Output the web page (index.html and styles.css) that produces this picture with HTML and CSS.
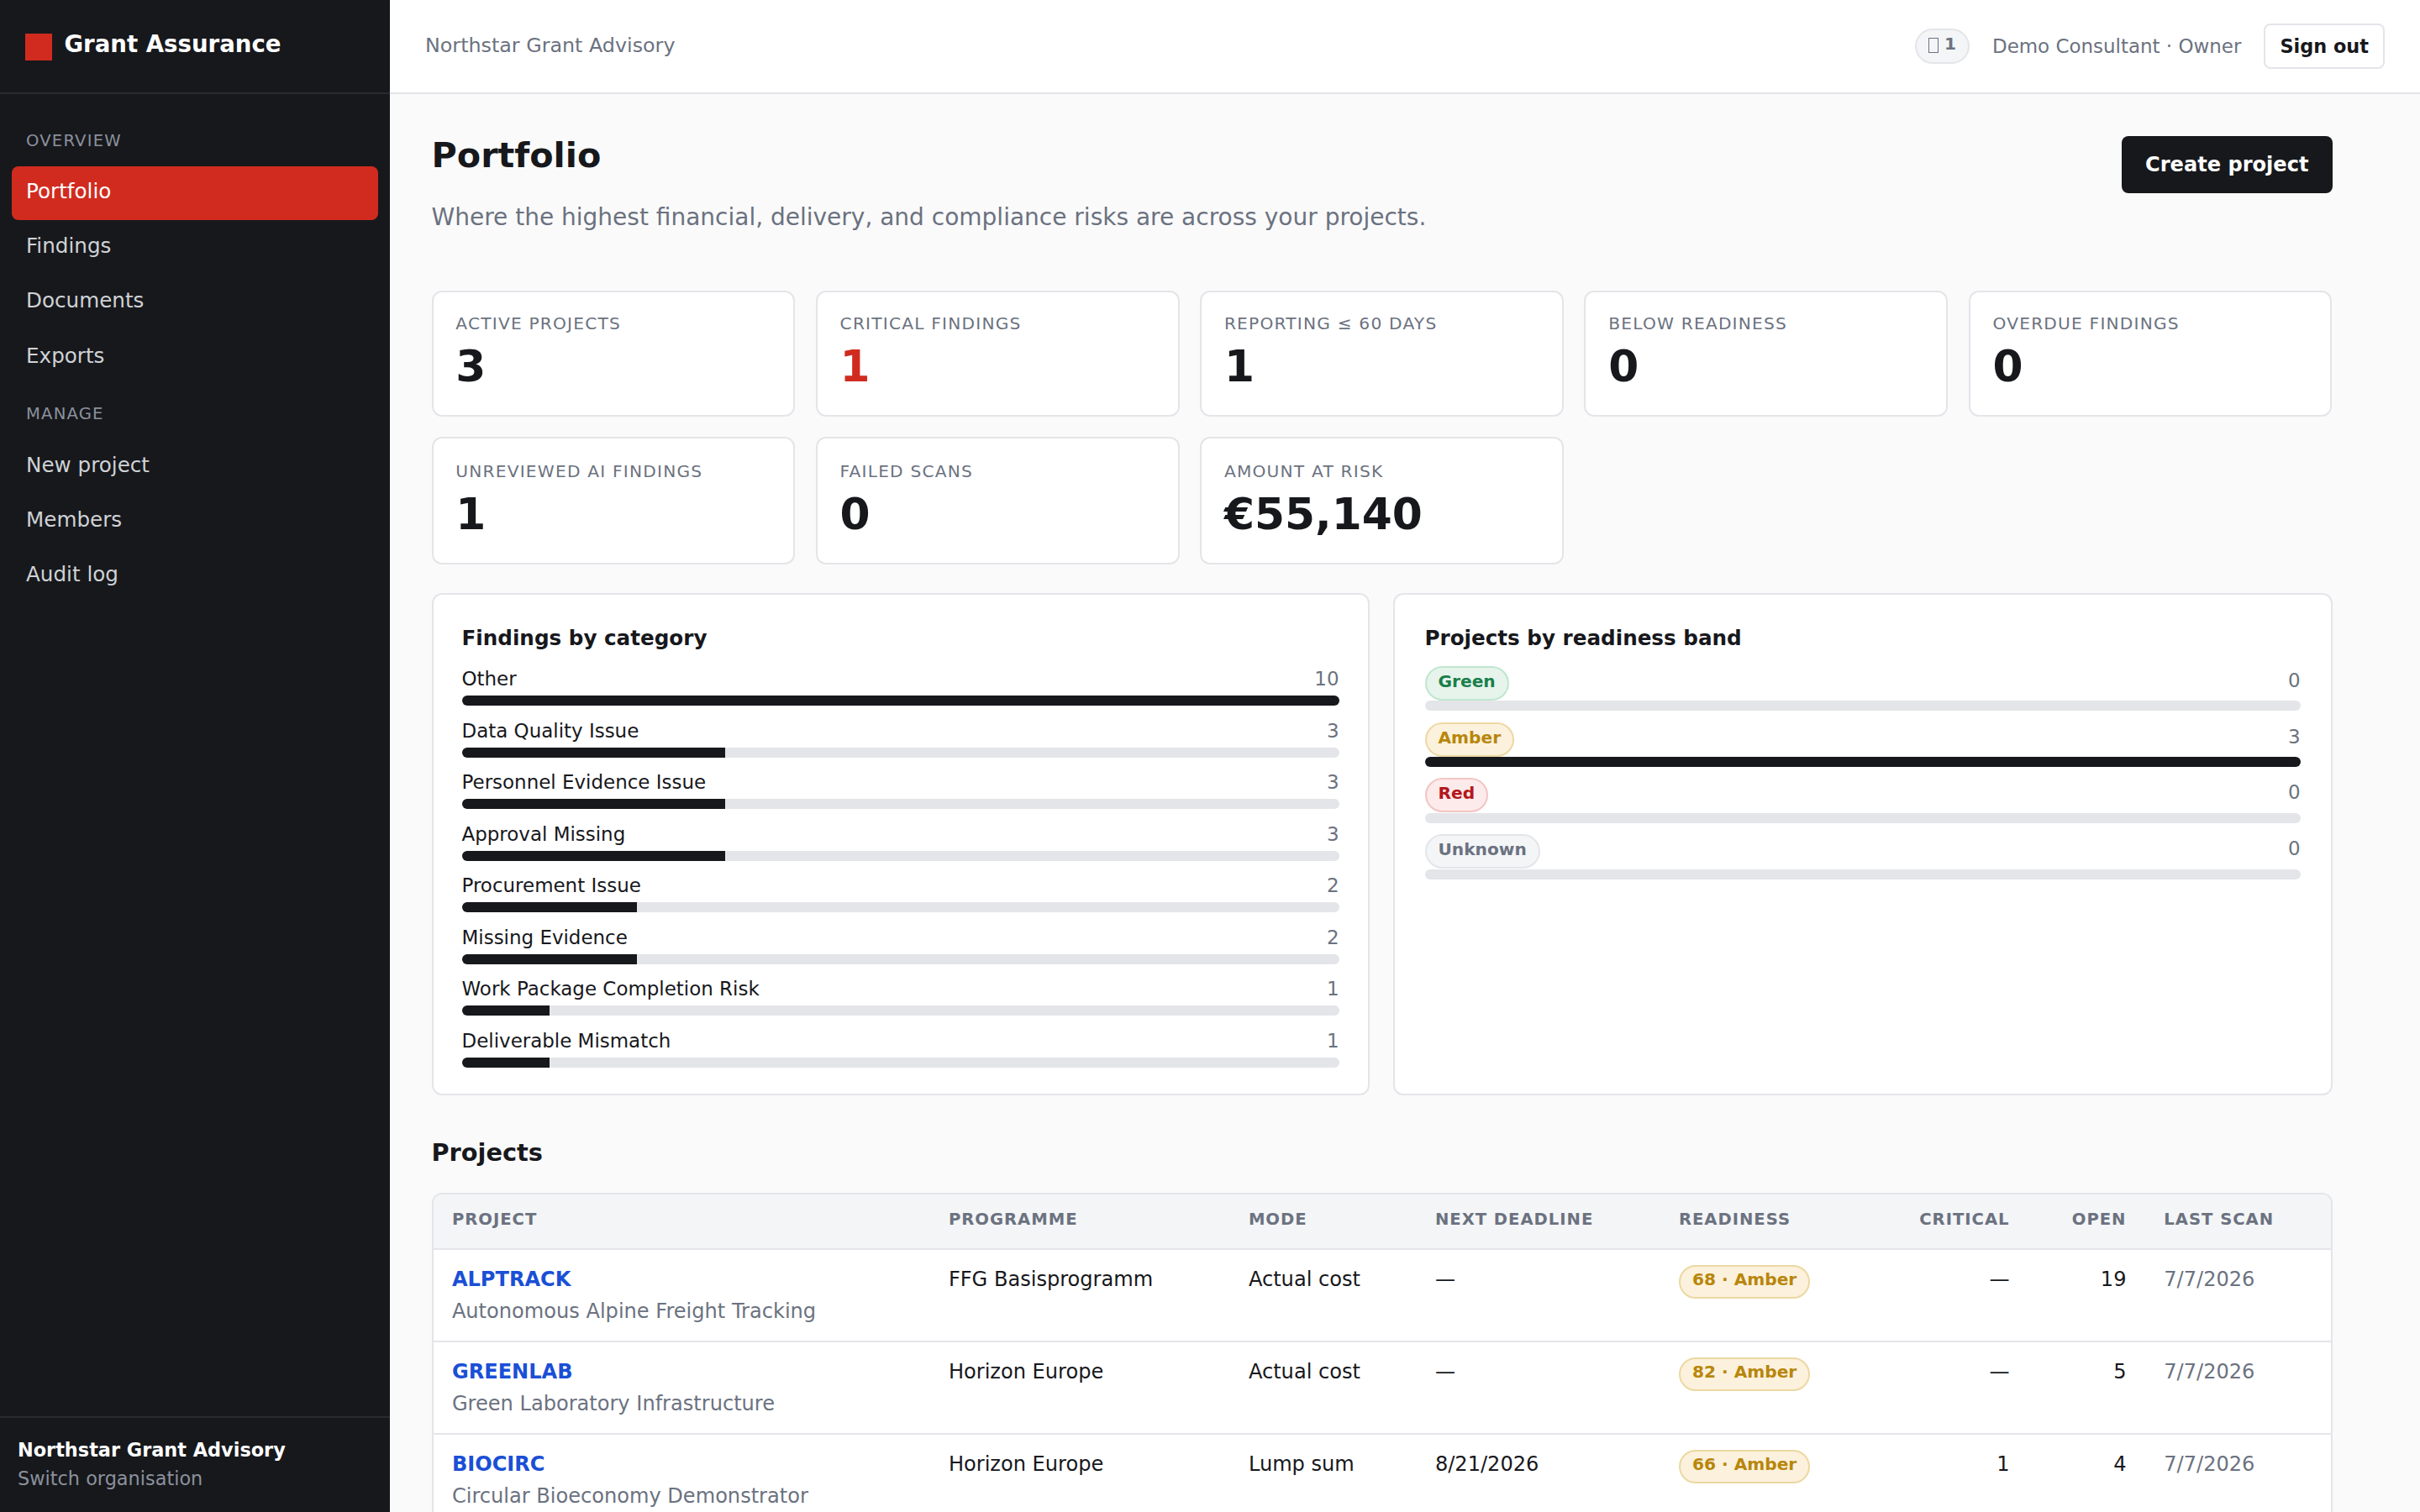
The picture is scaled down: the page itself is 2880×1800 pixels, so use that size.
FILE: index.html
```html
<!DOCTYPE html>
<html lang="en">
<head>
<meta charset="UTF-8" />
<meta name="viewport" content="width=device-width, initial-scale=1.0" />
<title>Portfolio – Grant Assurance</title>
<link rel="stylesheet" href="styles.css">
</head>
<body>
<div class="app">

  <aside class="sidebar">
    <div class="brand"><span class="brand-mark"></span><span>Grant Assurance</span></div>
    <nav class="nav">
      <div class="nav-label">Overview</div>
      <a class="nav-link active" href="#">Portfolio</a>
      <a class="nav-link" href="#">Findings</a>
      <a class="nav-link" href="#">Documents</a>
      <a class="nav-link" href="#">Exports</a>
      <div class="nav-label">Manage</div>
      <a class="nav-link" href="#">New project</a>
      <a class="nav-link" href="#">Members</a>
      <a class="nav-link" href="#">Audit log</a>
    </nav>
    <div class="sidebar-footer">
      <strong>Northstar Grant Advisory</strong>
      <a href="#">Switch organisation</a>
    </div>
  </aside>

  <div class="main">
    <header class="topbar">
      <span>Northstar Grant Advisory</span>
      <div class="topbar-right">
        <span class="badge alerts"><span class="alerts-icon"></span> 1</span>
        <span>Demo Consultant · Owner</span>
        <button class="btn-outline">Sign out</button>
      </div>
    </header>

    <main class="content">
      <div class="page-head">
        <div>
          <h1>Portfolio</h1>
          <p>Where the highest financial, delivery, and compliance risks are across your projects.</p>
        </div>
        <a class="btn" href="#">Create project</a>
      </div>

      <section class="stats">
        <div class="stat"><div class="stat-label">Active projects</div><div class="stat-value">3</div></div>
        <div class="stat"><div class="stat-label">Critical findings</div><div class="stat-value critical">1</div></div>
        <div class="stat"><div class="stat-label">Reporting ≤ 60 days</div><div class="stat-value">1</div></div>
        <div class="stat"><div class="stat-label">Below readiness</div><div class="stat-value">0</div></div>
        <div class="stat"><div class="stat-label">Overdue findings</div><div class="stat-value">0</div></div>
        <div class="stat"><div class="stat-label">Unreviewed AI findings</div><div class="stat-value">1</div></div>
        <div class="stat"><div class="stat-label">Failed scans</div><div class="stat-value">0</div></div>
        <div class="stat"><div class="stat-label">Amount at risk</div><div class="stat-value">€55,140</div></div>
      </section>

      <section class="panels">
        <div class="panel">
          <h3>Findings by category</h3>
          <div class="bar-row">
            <div class="bar-head"><span>Other</span><span class="muted">10</span></div>
            <div class="bar"><div class="bar-fill" style="width: 100%"></div></div>
          </div>
          <div class="bar-row">
            <div class="bar-head"><span>Data Quality Issue</span><span class="muted">3</span></div>
            <div class="bar"><div class="bar-fill" style="width: 30%"></div></div>
          </div>
          <div class="bar-row">
            <div class="bar-head"><span>Personnel Evidence Issue</span><span class="muted">3</span></div>
            <div class="bar"><div class="bar-fill" style="width: 30%"></div></div>
          </div>
          <div class="bar-row">
            <div class="bar-head"><span>Approval Missing</span><span class="muted">3</span></div>
            <div class="bar"><div class="bar-fill" style="width: 30%"></div></div>
          </div>
          <div class="bar-row">
            <div class="bar-head"><span>Procurement Issue</span><span class="muted">2</span></div>
            <div class="bar"><div class="bar-fill" style="width: 20%"></div></div>
          </div>
          <div class="bar-row">
            <div class="bar-head"><span>Missing Evidence</span><span class="muted">2</span></div>
            <div class="bar"><div class="bar-fill" style="width: 20%"></div></div>
          </div>
          <div class="bar-row">
            <div class="bar-head"><span>Work Package Completion Risk</span><span class="muted">1</span></div>
            <div class="bar"><div class="bar-fill" style="width: 10%"></div></div>
          </div>
          <div class="bar-row">
            <div class="bar-head"><span>Deliverable Mismatch</span><span class="muted">1</span></div>
            <div class="bar"><div class="bar-fill" style="width: 10%"></div></div>
          </div>
        </div>

        <div class="panel panel-bands">
          <h3>Projects by readiness band</h3>
          <div class="bar-row band">
            <div class="bar-head"><span class="badge green">Green</span><span class="muted">0</span></div>
            <div class="bar"><div class="bar-fill" style="width: 0%"></div></div>
          </div>
          <div class="bar-row band">
            <div class="bar-head"><span class="badge amber">Amber</span><span class="muted">3</span></div>
            <div class="bar"><div class="bar-fill" style="width: 100%"></div></div>
          </div>
          <div class="bar-row band">
            <div class="bar-head"><span class="badge red">Red</span><span class="muted">0</span></div>
            <div class="bar"><div class="bar-fill" style="width: 0%"></div></div>
          </div>
          <div class="bar-row band">
            <div class="bar-head"><span class="badge">Unknown</span><span class="muted">0</span></div>
            <div class="bar"><div class="bar-fill" style="width: 0%"></div></div>
          </div>
        </div>
      </section>

      <h2>Projects</h2>
      <div class="table-wrap">
        <table>
          <colgroup>
            <col class="col-project"><col class="col-programme"><col class="col-mode"><col class="col-deadline">
            <col class="col-readiness"><col class="col-critical"><col class="col-open"><col>
          </colgroup>
          <thead>
            <tr>
              <th>Project</th>
              <th>Programme</th>
              <th>Mode</th>
              <th>Next deadline</th>
              <th>Readiness</th>
              <th class="num">Critical</th>
              <th class="num">Open</th>
              <th>Last scan</th>
            </tr>
          </thead>
          <tbody>
            <tr>
              <td><a href="#">ALPTRACK</a><div class="sub">Autonomous Alpine Freight Tracking</div></td>
              <td>FFG Basisprogramm</td>
              <td>Actual cost</td>
              <td>—</td>
              <td><span class="badge amber">68 · Amber</span></td>
              <td class="num">—</td>
              <td class="num">19</td>
              <td class="muted">7/7/2026</td>
            </tr>
            <tr>
              <td><a href="#">GREENLAB</a><div class="sub">Green Laboratory Infrastructure</div></td>
              <td>Horizon Europe</td>
              <td>Actual cost</td>
              <td>—</td>
              <td><span class="badge amber">82 · Amber</span></td>
              <td class="num">—</td>
              <td class="num">5</td>
              <td class="muted">7/7/2026</td>
            </tr>
            <tr>
              <td><a href="#">BIOCIRC</a><div class="sub">Circular Bioeconomy Demonstrator</div></td>
              <td>Horizon Europe</td>
              <td>Lump sum</td>
              <td>8/21/2026</td>
              <td><span class="badge amber">66 · Amber</span></td>
              <td class="num">1</td>
              <td class="num">4</td>
              <td class="muted">7/7/2026</td>
            </tr>
          </tbody>
        </table>
      </div>
    </main>
  </div>

</div>
</body>
</html>
```

FILE: styles.css
```css
:root {
  --ink: #17181c;
  --muted: #6b7280;
  --line: #e4e5e9;
  --bg: #fafafa;
  --soft: #f4f5f7;
  --accent: #d12b1f;
  --link: #1a4fd6;
}

* {
  box-sizing: border-box;
}

body {
  margin: 0;
  height: 100vh;
  overflow: hidden;
  font-family: "DejaVu Sans", sans-serif;
  font-size: 28px;
  line-height: 1.5;
  color: var(--ink);
  background: var(--bg);
}

a {
  text-decoration: none;
}

.muted {
  color: var(--muted);
}

.app {
  display: flex;
  height: 100vh;
}

/* Sidebar */
.sidebar {
  width: 464px;
  flex-shrink: 0;
  display: flex;
  flex-direction: column;
  background: var(--ink);
  color: #fff;
}

.brand {
  display: flex;
  gap: 14.4px;
  height: 112px;
  padding: 32px 30px 0;
  border-bottom: 2px solid #2a2b30;
  font-size: 27.6px;
  font-weight: bold;
  white-space: nowrap;
}

.brand-mark {
  width: 32px;
  height: 32px;
  margin-top: 8px;
  background: var(--accent);
}

.nav {
  flex: 1;
  padding: 20px 14px;
}

.nav-label {
  margin: 20.5px 0 16px;
  padding: 0 17px;
  font-size: 19.6px;
  letter-spacing: 0.06em;
  text-transform: uppercase;
  color: #8b919c;
}

.nav-link {
  display: block;
  margin-bottom: 1.3px;
  padding: 11px 17px 16px;
  border-radius: 8px;
  font-size: 24.64px;
  line-height: 37px;
  color: #cfd2d6;
}

.nav-link.active {
  background: var(--accent);
  color: #fff;
}

.sidebar-footer {
  padding: 22.5px 21px 22.5px;
  border-top: 2px solid #2a2b30;
  font-size: 22.4px;
}

.sidebar-footer strong,
.sidebar-footer a {
  display: block;
}

.sidebar-footer a {
  color: #8b919c;
}

/* Topbar */
.main {
  flex: 1;
  min-width: 0;
}

.topbar {
  display: flex;
  justify-content: space-between;
  align-items: center;
  height: 112px;
  padding: 0 42px;
  background: #fff;
  border-bottom: 2px solid var(--line);
  font-size: 23.8px;
  color: var(--muted);
}

.topbar-right {
  display: flex;
  align-items: center;
  gap: 27px;
  font-size: 22.96px;
}

.badge {
  display: inline-block;
  padding: 1px 14px 5px;
  border: 2px solid var(--line);
  border-radius: 999px;
  background: var(--soft);
  color: var(--muted);
  font-size: 20.16px;
  font-weight: bold;
  line-height: 31px;
  white-space: nowrap;
}

.badge.green {
  background: #e6f4ec;
  border-color: #bfe6cf;
  color: #1b7f4b;
}

.badge.amber {
  background: #fbf1dc;
  border-color: #ecd8a2;
  color: #b8860b;
}

.badge.red {
  background: #fdeaea;
  border-color: #f1c5c3;
  color: #b3161b;
}

.badge.alerts {
  padding-bottom: 6px;
}

.alerts-icon {
  display: inline-block;
  width: 11.5px;
  height: 18px;
  border: 1.5px solid var(--muted);
  vertical-align: -4px;
}

.btn-outline {
  height: 54px;
  padding: 0 17px;
  border: 2px solid var(--line);
  border-radius: 8px;
  background: #fff;
  color: var(--ink);
  font-family: inherit;
  font-size: 22.4px;
  font-weight: bold;
}

.btn {
  height: 68px;
  padding: 16px 28px;
  border-radius: 8px;
  background: var(--ink);
  color: #fff;
  font-size: 24.1px;
  font-weight: bold;
  line-height: 36px;
}

/* Content */
.content {
  width: 2361px;
  padding: 50px 49.5px;
}

.page-head {
  display: flex;
  justify-content: space-between;
  align-items: flex-start;
  margin-bottom: 66px;
}

h1 {
  margin: 0 0 29px;
  font-size: 41.3px;
  line-height: 47px;
}

.page-head p {
  margin: 0;
  color: var(--muted);
}

.stats {
  display: grid;
  grid-template-columns: repeat(5, 1fr);
  grid-template-rows: 150px 152px;
  gap: 24px 24.5px;
  margin-bottom: 34px;
}

.stat {
  display: flex;
  flex-direction: column;
  justify-content: flex-end;
  padding: 0 26.8px 27.2px;
  background: #fff;
  border: 2px solid var(--line);
  border-radius: 12px;
}

.stat-label {
  font-size: 20.16px;
  letter-spacing: 0.06em;
  text-transform: uppercase;
  color: var(--muted);
}

.stat-value {
  margin-top: 4px;
  font-size: 51.8px;
  font-weight: bold;
  line-height: 1.2;
}

.stat-value.critical {
  color: var(--accent);
}

.panels {
  display: grid;
  grid-template-columns: 1116px 1fr;
  gap: 28px;
  margin-bottom: 52px;
}

.panel {
  height: 598px;
  padding: 33.6px 34px;
  background: #fff;
  border: 2px solid var(--line);
  border-radius: 12px;
}

.panel-bands {
  padding: 33.6px 36px;
}

.panel h3 {
  margin: 0 0 14.6px;
  font-size: 24.64px;
  line-height: 35px;
}

.bar-row {
  margin-bottom: 12.3px;
  font-size: 22.96px;
}

.bar-head {
  display: flex;
  justify-content: space-between;
  align-items: baseline;
  height: 34.4px;
  margin-bottom: 2.8px;
}

.bar {
  height: 12px;
  border-radius: 6px;
  background: var(--line);
  overflow: hidden;
}

.bar-fill {
  height: 100%;
  background: var(--ink);
}

.band .bar-head {
  height: 43px;
  margin-bottom: 0;
  padding-top: 1.6px;
}

.band {
  margin-bottom: 11.8px;
}

h2 {
  margin: 0 0 31px;
  font-size: 28.8px;
  line-height: 33px;
}

/* Projects table */
.table-wrap {
  background: #fff;
  border: 2px solid var(--line);
  border-radius: 12px;
  overflow: hidden;
}

table {
  width: 100%;
  table-layout: fixed;
  border-spacing: 0;
  font-size: 24.08px;
}

.col-project { width: 591px; }
.col-programme { width: 357px; }
.col-mode { width: 222px; }
.col-deadline { width: 290px; }
.col-readiness { width: 264px; }
.col-critical { width: 174.4px; }
.col-open { width: 139px; }

th,
td {
  text-align: left;
  vertical-align: top;
  border-bottom: 2px solid var(--line);
  white-space: nowrap;
}

th {
  height: 66px;
  padding: 14.5px 22.4px 0;
  background: var(--soft);
  color: var(--muted);
  font-size: 19.6px;
  letter-spacing: 0.05em;
  text-transform: uppercase;
}

td {
  height: 110px;
  padding: 16.6px 22.4px 0;
}

td a {
  color: var(--link);
  font-weight: bold;
}

td .badge {
  margin-top: 1.4px;
  padding: 0 14px 5px;
  vertical-align: top;
}

.sub {
  margin-top: 2px;
  color: var(--muted);
}

.num {
  text-align: right;
}
```
